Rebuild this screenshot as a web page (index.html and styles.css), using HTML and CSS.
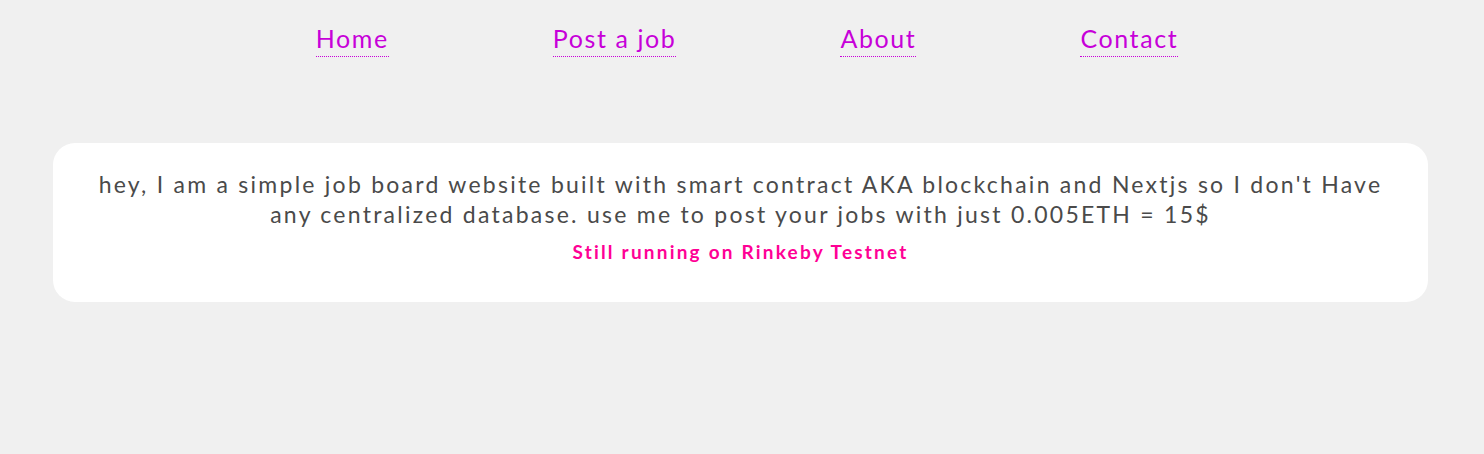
FILE: index.html
```html
<!DOCTYPE html>
<html>
<head>
<meta charset="utf-8">
<link rel="stylesheet" href="styles.css">
</head>
<body>
<nav class="nav">
  <a class="nav-link" href="#">Home</a>
  <a class="nav-link" href="#">Post a job</a>
  <a class="nav-link" href="#">About</a>
  <a class="nav-link" href="#">Contact</a>
</nav>
<main class="card">
  <p class="intro">hey, I am a simple job board website built with smart contract AKA blockchain and Nextjs so I don't Have any centralized database. use me to post your jobs with just 0.005ETH = 15$</p>
  <p class="notice">Still running on Rinkeby Testnet</p>
</main>
</body>
</html>
```
FILE: styles.css
```css
html, body {
  margin: 0;
  padding: 0;
}
body {
  background: #f0f0f0;
  font-family: Lato, "Noto Sans", sans-serif;
  color: #444;
}
.nav {
  display: flex;
  justify-content: center;
  gap: 164px;
  padding: 27px 0 0 10px;
  height: 30px;
}
.nav-link {
  display: inline-block;
  font-size: 25px;
  line-height: 22px;
  letter-spacing: 1.6px;
  color: #c700d9;
  text-decoration: none;
  border-bottom: 1px dotted #c700d9;
  padding-bottom: 3px;
}
.card {
  margin: 86px 56px 0 53px;
  background: #fff;
  border-radius: 22px;
  padding: 26px 40px 38px;
  text-align: center;
}
.intro {
  margin: 0;
  font-size: 23px;
  line-height: 30px;
  letter-spacing: 2.25px;
  color: #4a4a4a;
}
.notice {
  margin: 11px 0 0;
  font-size: 19px;
  line-height: 24px;
  font-weight: 700;
  letter-spacing: 2.2px;
  color: #ff0095;
}
```
